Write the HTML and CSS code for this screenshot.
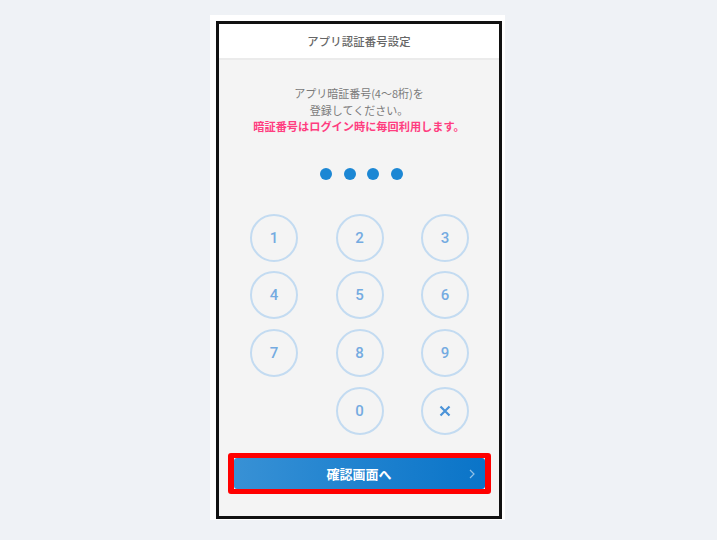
FILE: index.html
```html
<!DOCTYPE html>
<html lang="ja">
<head>
<meta charset="utf-8">
<title>アプリ認証番号設定</title>
<link rel="stylesheet" href="styles.css">
</head>
<body>
<div class="page">
  <div class="frame">
    <div class="phone">
      <header class="header">アプリ認証番号設定</header>
      <main class="body">
        <p class="lead">アプリ暗証番号(4〜8桁)を<br>登録してください。<br><strong class="warn">暗証番号はログイン時に毎回利用します。</strong></p>
        <div class="dots"><span></span><span></span><span></span><span></span></div>
        <div class="keypad">
          <button class="key">1</button>
          <button class="key">2</button>
          <button class="key">3</button>
          <button class="key">4</button>
          <button class="key">5</button>
          <button class="key">6</button>
          <button class="key">7</button>
          <button class="key">8</button>
          <button class="key">9</button>
          <span class="key-empty"></span>
          <button class="key">0</button>
          <button class="key key-del"><svg width="12" height="12" viewBox="0 0 12 12"><path d="M1.5 1.5 L10.5 10.5 M10.5 1.5 L1.5 10.5" stroke="#4b93d8" stroke-width="2.2" stroke-linecap="butt"/></svg></button>
        </div>
        <div class="highlight">
          <button class="next">確認画面へ<svg class="chev" width="6" height="10" viewBox="0 0 6 10"><path d="M1 1 L5 5 L1 9" fill="none" stroke="rgba(255,255,255,0.55)" stroke-width="1.2"/></svg></button>
        </div>
      </main>
    </div>
  </div>
</div>
</body>
</html>
```
FILE: styles.css
```css
* { box-sizing: border-box; }
html, body { margin: 0; padding: 0; }
body {
  background: #eff2f6;
  font-family: "Noto Sans CJK JP", "Noto Sans", sans-serif;
  width: 717px;
  height: 540px;
  overflow: hidden;
}
.page {
  padding-top: 15px;
  display: flex;
  justify-content: center;
}
.frame {
  margin-right: 2px;
  width: 295px;
  background: #ffffff;
  padding: 6px 3px 1px 6px;
}
.phone {
  width: 286px;
  height: 498px;
  border: 3px solid #111;
  background: #f4f4f4;
  display: flex;
  flex-direction: column;
}
.header {
  height: 36px;
  background: #fff;
  border-bottom: 2px solid #ebebeb;
  display: flex;
  align-items: center;
  justify-content: center;
  font-size: 11.3px;
  font-weight: 500;
  color: #666;
  letter-spacing: 0.2px;
}
.body {
  flex: 1;
  display: flex;
  flex-direction: column;
  align-items: center;
  padding-top: 25px;
}
.lead {
  margin: 0;
  text-align: center;
  font-size: 11px;
  line-height: 16.5px;
  color: #7a7a7a;
}
.warn {
  color: #ff3d80;
  font-weight: 700;
  font-size: 11.2px;
}
.dots {
  margin-top: 33px;
  margin-left: 5px;
  display: flex;
  gap: 11.7px;
}
.dots span {
  width: 12px;
  height: 12px;
  border-radius: 50%;
  background: #1c87d4;
}
.keypad {
  margin-top: 34px;
  display: grid;
  grid-template-columns: repeat(3, 48px);
  grid-auto-rows: 48px;
  column-gap: 37.5px;
  row-gap: 9.7px;
  margin-left: 1px;
}
.key {
  width: 48px;
  height: 48px;
  border-radius: 50%;
  border: 2px solid #c3dbf1;
  background: transparent;
  padding: 0;
  font-family: Roboto, "Noto Sans", sans-serif;
  font-size: 15px;
  font-weight: 500;
  color: #74abe1;
  display: flex;
  align-items: center;
  justify-content: center;
}
.key-del svg { display: block; }
.highlight {
  margin-top: 18px;
  width: 263px;
  border: 5px solid #ff0000;
  border-left-width: 6px;
  border-right-width: 6px;
  border-radius: 3px;
  background: #fff;
}
.next {
  position: relative;
  display: flex;
  align-items: center;
  justify-content: center;
  width: 100%;
  height: 31px;
  border: 0;
  border-radius: 3px;
  background: linear-gradient(90deg, #3891d5 0%, #1f82cf 50%, #0a74c8 100%);
  color: #fff;
  font-family: "Noto Sans CJK JP", sans-serif;
  font-size: 13px;
  font-weight: 700;
  padding: 0;
}
.chev {
  position: absolute;
  right: 10px;
  top: 11px;
}
```
